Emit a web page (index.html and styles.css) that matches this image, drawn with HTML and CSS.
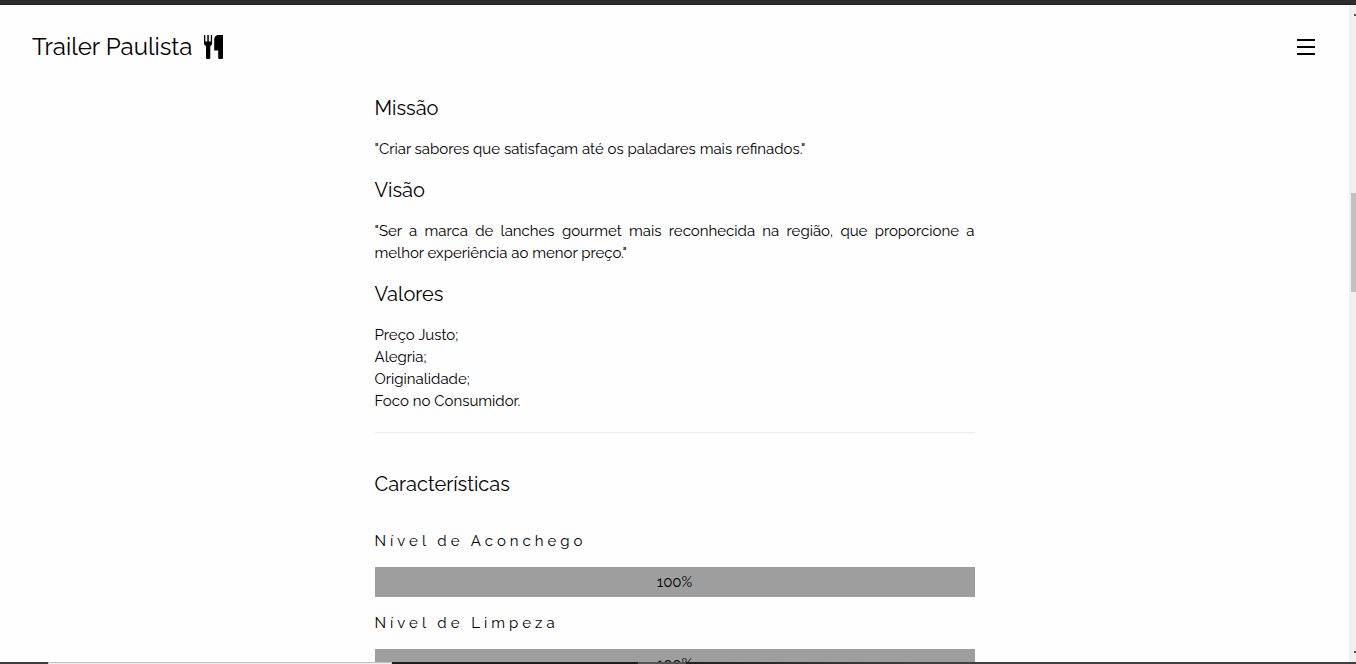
FILE: index.html
```html
<!DOCTYPE html>
<html lang="pt-BR">
<head>
<meta charset="utf-8">
<title>Trailer Paulista</title>
<link rel="stylesheet" href="styles.css">
</head>
<body>
<div class="window">
  <div class="frame-top"></div>
  <div class="viewport">
    <div class="page">
      <header class="header">
        <a class="brand" href="#">Trailer Paulista
          <svg class="brand-icon" viewBox="0 0 20 24" aria-hidden="true">
            <path d="M0 0h1.300v6.500h2V0h1.500v6.500h2V0h1.300v8.300c0 1.500-.8 2.300-1.800 2.700V22.500c0 1-.5 1.500-1.500 1.500H3.500c-1 0-1.500-.5-1.500-1.500V11C.8 10.600 0 9.800 0 8.300z"/>
            <path d="M14.500 0H19v22.500c0 1-.6 1.500-1.500 1.500h-1.700c-1 0-1.600-.5-1.600-1.500V15.500H10.200V4.500C10.200 1.800 12 0 14.500 0z"/>
          </svg>
        </a>
        <button class="menu" type="button" aria-label="Menu">
          <svg class="menu-icon" viewBox="0 0 18 18" aria-hidden="true"><path d="M0 1h18v2H0zM0 8h18v2H0zM0 15h18v2H0z"/></svg>
        </button>
      </header>
      <main class="content">
        <h4>Missão</h4>
        <p>"Criar sabores que satisfaçam até os paladares mais refinados."</p>
        <h4>Visão</h4>
        <p>"Ser a marca de lanches gourmet mais reconhecida na região, que proporcione a melhor experiência ao menor preço."</p>
        <h4>Valores</h4>
        <p>Preço Justo;<br>Alegria;<br>Originalidade;<br>Foco no Consumidor.</p>
        <hr>
        <h4 class="features-title">Características</h4>
        <p class="wide">Nível de Aconchego</p>
        <div class="bar">100%</div>
        <p class="wide">Nível de Limpeza</p>
        <div class="bar">100%</div>
      </main>
    </div>
    <div class="scrollbar">
      <span class="arrow arrow-up"></span>
      <div class="thumb"></div>
      <span class="arrow arrow-down"></span>
    </div>
  </div>
  <div class="frame-bottom">
    <div class="seg-start"></div>
    <div class="seg-search"></div>
    <div class="seg-dark"></div>
    <div class="seg-active"></div>
    <div class="seg-rest"></div>
  </div>
</div>
</body>
</html>
```
FILE: styles.css
```css
* { box-sizing: border-box; }

body {
  margin: 0;
  background: #fefefe;
  color: #000;
  font-family: Raleway, "Open Sans", sans-serif;
  font-size: 15px;
  font-weight: 400;
  line-height: 22px;
}

.window {
  display: flex;
  flex-direction: column;
  height: 100vh;
  overflow: hidden;
}

.frame-top {
  flex: none;
  height: 5px;
  background: #2d2d2d;
  border-bottom: 1px solid #202020;
}

.viewport {
  display: flex;
  flex: 1;
  min-height: 0;
}

.page {
  flex: 1;
  min-width: 0;
  overflow: hidden;
}

.header {
  display: flex;
  align-items: center;
  justify-content: space-between;
  padding: 24px 34px 28px 32px;
}

.brand {
  display: flex;
  align-items: center;
  gap: 12px;
  color: #000;
  font-size: 24px;
  line-height: 36px;
  text-decoration: none;
}

.brand-icon { width: 20px; height: 24px; }

.menu {
  display: flex;
  padding: 0;
  border: 0;
  background: none;
}

.menu-icon { width: 18px; height: 18px; }

.content {
  max-width: 600px;
  margin: 0 auto;
}

h4 {
  margin: 0;
  font-size: 20px;
  font-weight: 400;
  line-height: 30px;
}

p {
  margin: 15px 0;
  text-align: justify;
}

hr {
  margin: 20px 0 36px;
  border: 0;
  border-top: 1px solid #eee;
}

.features-title { margin-bottom: 31px; }

.wide { letter-spacing: 4px; }

.bar {
  padding: 4px 0;
  background: #9e9e9e;
  text-align: center;
}

.scrollbar {
  display: flex;
  flex-direction: column;
  flex: none;
  width: 7px;
  padding: 9px 0 9px 2px;
  background: #f0f0f0;
}

.thumb {
  height: 99px;
  margin: 177px 0 auto;
  background: #c1c1c1;
}

.arrow {
  align-self: flex-end;
  width: 2px;
  height: 2px;
  background: #505050;
}

.frame-bottom {
  display: flex;
  flex: none;
  height: 2px;
}

.seg-start { width: 48px; background: #3a3a3a; }
.seg-search { width: 344px; background: #f0f0f0; border: 1px solid #c0c0c0; border-bottom: 0; }
.seg-dark { width: 246px; background: #202020; }
.seg-active { width: 48px; background: #555; }
.seg-rest { flex: 1; background: linear-gradient(90deg, #202020, #3f3f3f 35%); }
```
